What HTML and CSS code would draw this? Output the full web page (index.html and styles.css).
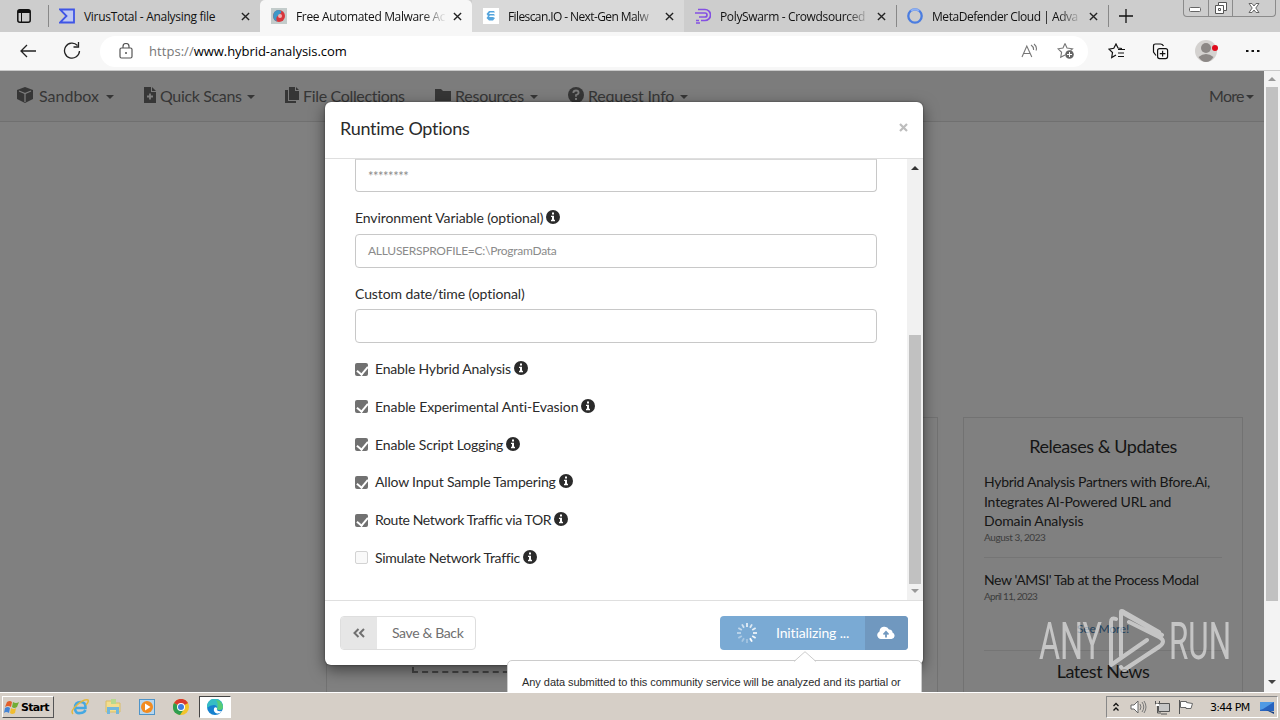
FILE: index.html
```html
<!DOCTYPE html>
<html lang="en">
<head>
<meta charset="utf-8">
<title>Free Automated Malware Analysis Service</title>
<link rel="stylesheet" href="styles.css">
</head>
<body>
<svg class="defs" width="0" height="0">
    <symbol id="info" viewBox="0 0 14 14"><circle cx="7" cy="7" r="7" fill="#2b2b2b"/><path d="M6 2.5h2v2H6zM5 5.7h3v4h1v1.5H5V9.7h1V7.1H5z" fill="#fff"/></symbol>
    <symbol id="close" viewBox="0 0 10 10"><path d="M1 1l8 8M9 1L1 9" stroke="#222" stroke-width="1.5"/></symbol>
</svg>

<div class="tabs">
    <div class="tab-menu">
        <svg width="14" height="14"><rect x=".8" y=".8" width="12.400" height="12.400" rx="2" fill="none" stroke="#111" stroke-width="1.500"/><path d="M1 1h12v3H1z" fill="#111"/><path d="M4.500 4v9" stroke="#111"/></svg>
    </div>
    <div class="tab first">
        <svg class="fav" width="16" height="16"><path d="M1 1.500h14v13H1l6.500-6.500z" fill="#bfc9f3" stroke="#3f55e6" stroke-width="1.800"/></svg>
        <span class="tab-title t1">VirusTotal - Analysing file</span>
        <svg class="x" width="9" height="9"><use href="#close"/></svg>
    </div>
    <div class="tab active">
        <svg class="fav" width="16" height="16"><rect width="16" height="16" fill="#c3cccb"/><circle cx="8" cy="8" r="6" fill="#d9363c"/><path d="M8 2a6 6 0 0 0-2 11.600C4 9 7 8 9 6s2-3-1-4z" fill="#3d98c8"/><circle cx="9" cy="8" r="2" fill="#f0b4b4"/></svg>
        <span class="tab-title t2 fade">Free Automated Malware Ac</span>
        <svg class="x" width="9" height="9"><use href="#close"/></svg>
    </div>
    <div class="tab light">
        <svg class="fav" width="16" height="16"><rect width="16" height="16" fill="#fff"/><path d="M6 3h5l1 1.500H7L6 6h5l1 1.500H7L6 9h4l2 1-2 2.500H6L3.500 10 5 8 3.500 6z" fill="#55a5dd"/></svg>
        <span class="tab-title t3 fade">Filescan.IO - Next-Gen Malw</span>
        <svg class="x" width="9" height="9"><use href="#close"/></svg>
    </div>
    <div class="tab">
        <svg class="fav" width="17" height="16"><path d="M3 1.500h7a5.500 5.500 0 0 1 0 11H6M0 5h10a2 2 0 0 1 0 4H4M1 12.500h3M1 15h4" fill="none" stroke="#8450e2" stroke-width="1.700"/></svg>
        <span class="tab-title t4 fade">PolySwarm - Crowdsourced</span>
        <svg class="x" width="9" height="9"><use href="#close"/></svg>
    </div>
    <div class="tab lined">
        <svg class="fav" width="16" height="16"><circle cx="8" cy="8" r="6.700" fill="none" stroke="#4b7de0" stroke-width="2.300"/><path d="M4 2.800A6.700 6.700 0 0 1 12 2.800" fill="none" stroke="#8eb0f3" stroke-width="2.300"/></svg>
        <span class="tab-title t5 fade">MetaDefender Cloud | Adva</span>
        <svg class="x" width="9" height="9"><use href="#close"/></svg>
    </div>
    <div class="new-tab">
        <svg width="14" height="14"><path d="M7 0v14M0 7h14" stroke="#111" stroke-width="1.300"/></svg>
    </div>
    <div class="win-buttons">
        <span class="wb min"><svg width="13" height="6"><rect x=".5" y=".5" width="11" height="4" rx="1" fill="#fff" stroke="#666"/></svg></span>
        <span class="wb max"><svg width="14" height="14"><path d="M4.500 1.500h8v8h-3v3h-8v-8h3z" fill="#fff" stroke="#555"/><path d="M4.500 4.500h5v5M4.500 7.500h2v2h-2z" fill="none" stroke="#555"/></svg></span>
        <span class="wb cls"><svg width="12" height="12"><path d="M1 1.500h3l2 2.500 2-2.500h3L7.800 6l3.200 4.500H8L6 8l-2 2.500H1L4.200 6z" fill="#fff" stroke="#666"/></svg></span>
    </div>
</div>

<div class="toolbar">
    <svg class="back" width="16" height="14"><path d="M16 7H1M7 1L1 7l6 6" fill="none" stroke="#222" stroke-width="1.300"/></svg>
    <svg class="reload" width="18" height="18"><path d="M14.500 3.500A7.500 7.500 0 1 0 16.500 9M15.500 0v5h-5" fill="none" stroke="#222" stroke-width="1.300"/></svg>
    <div class="address">
        <svg width="14" height="16"><rect x="1" y="5" width="12" height="10" rx="1.500" fill="none" stroke="#555" stroke-width="1.200"/><path d="M4 5V3.500a3 3 0 0 1 6 0V5" fill="none" stroke="#555" stroke-width="1.200"/><circle cx="7" cy="10" r="1" fill="#555"/></svg>
        <span class="url"><span class="scheme">https://</span>www.hybrid-analysis.com</span>
        <svg class="read" width="17" height="16"><path d="M1 14L5.800 3l5 11M2.800 10.500h6M10 2q3 2 2.500 5M13 1q3.500 3 2 6.500" fill="none" stroke="#777" stroke-width="1.100"/></svg>
        <svg class="addfav" width="18" height="18"><path d="M8 1.500l2 4.500 5.500.8-2 1.700M8 1.500L6 6l-5 .8 3.600 3.500-.9 5L8 13" fill="none" stroke="#777" stroke-width="1.100"/><circle cx="12.500" cy="12.500" r="4.300" fill="#666"/><path d="M12.500 10v5M10 12.500h5" stroke="#fff"/></svg>
    </div>
    <svg class="favs" width="18" height="16"><path d="M14 5.500l-4-.5-2-4-2.200 4.300-4.800.8 3.500 3.400-.8 5L8 12" fill="none" stroke="#111" stroke-width="1.200"/><path d="M10 6.500h7M10 10h6M10 13.500h6" stroke="#111" stroke-width="1.200"/></svg>
    <svg class="coll" width="17" height="17"><rect x="5.600" y="5.600" width="10" height="10" rx="2" fill="#f7f7f7" stroke="#111" stroke-width="1.200"/><path d="M10.600 7.800v5.600M7.800 10.600h5.600M4 12.500L1.500 9V3q0-2 2-2h5q2 0 3 2" fill="none" stroke="#111" stroke-width="1.200"/></svg>
    <svg class="user" width="24" height="22"><circle cx="11" cy="11" r="11" fill="#d4d2d0"/><circle cx="11" cy="8" r="5" fill="#8c8886"/><path d="M3.500 17q7.500-6 15 0-3 5-7.500 5t-7.500-5z" fill="#8c8886"/><circle cx="20" cy="8" r="3" fill="#e00b1c"/></svg>
    <svg class="dots" width="14" height="4"><path d="M0 1h2.500v2H0zM5.500 1H8v2H5.500zM11 1h2.500v2H11z" fill="#111"/></svg>
</div>

<div class="page">
    <div class="site">
        <div class="nav">
            <div class="nav-item sandbox">
                <svg width="16" height="16"><path d="M8 0l8 3v9l-8 4-8-4V3z" fill="#363636"/><path d="M2 4l6 2.500L14 4M8 6.500V15" fill="none" stroke="#7c7c7c" stroke-width="1.300"/></svg>
                <span>Sandbox</span><i class="caret"></i>
            </div>
            <div class="nav-item quick">
                <svg width="12" height="16"><path d="M0 0h7v5h5v11H0zM8 0l4 4H8z" fill="#363636"/><path d="M6 6.500v6M3 9.500h6" stroke="#7c7c7c" stroke-width="1.800"/></svg>
                <span>Quick Scans</span><i class="caret"></i>
            </div>
            <div class="nav-item files">
                <svg width="14" height="16"><path d="M4 0h6v4h4v9H4zM11 0l3 3h-3zM0 3h3v11h8v2H0z" fill="#363636"/></svg>
                <span>File Collections</span>
            </div>
            <div class="nav-item resources">
                <svg width="16" height="14"><path d="M0 1h6l2 2h8v10H0z" fill="#363636"/></svg>
                <span>Resources</span><i class="caret"></i>
            </div>
            <div class="nav-item request">
                <svg width="16" height="16"><circle cx="8" cy="8" r="8" fill="#363636"/><path d="M5.300 6Q5.500 3.500 8 3.500t2.600 2.200Q10.600 7.200 8 8v1.800" fill="none" stroke="#7c7c7c" stroke-width="1.800"/><path d="M7 11h2v2H7z" fill="#7c7c7c"/></svg>
                <span>Request Info</span><i class="caret"></i>
            </div>
            <div class="nav-item more"><span>More</span><i class="caret"></i></div>
        </div>
        <div class="columns">
            <div class="panel upload"><div class="dropzone"></div></div>
            <div class="panel news">
                <h3 class="releases">Releases &amp; Updates</h3>
                <div class="post">
                    <p class="headline"><span class="h1a">Hybrid Analysis Partners with Bfore.Ai,</span><br><span class="h1b">Integrates AI-Powered URL and</span><br><span class="h1c">Domain Analysis</span></p>
                    <p class="date">August 3, 2023</p>
                </div>
                <div class="post second">
                    <p class="headline h2a">New 'AMSI' Tab at the Process Modal</p>
                    <p class="date d2">April 11, 2023</p>
                </div>
                <p class="see-more">See More!</p>
                <h3 class="latest">Latest News</h3>
            </div>
        </div>
    </div>
    <div class="scrollbar">
        <i class="arrow up"></i>
        <div class="thumb"></div>
        <i class="arrow down"></i>
    </div>

    <div class="modal">
        <div class="modal-header">
            <h4>Runtime Options</h4>
            <svg width="9" height="9"><path d="M1 1l7 7M8 1L1 8" stroke="#bdbdbd" stroke-width="2.200"/></svg>
        </div>
        <div class="modal-body">
            <div class="form">
                <div class="field cut"><span class="stars">********</span></div>
                <div class="label lab1"><span>Environment Variable (optional)</span><svg width="14" height="14"><use href="#info"/></svg></div>
                <div class="field env">ALLUSERSPROFILE=C:\ProgramData</div>
                <div class="label lab2"><span>Custom date/time (optional)</span></div>
                <div class="field"></div>
                <div class="checks">
                    <div class="check"><i class="box on"></i><span class="c1">Enable Hybrid Analysis</span><svg width="14" height="14"><use href="#info"/></svg></div>
                    <div class="check"><i class="box on"></i><span class="c2">Enable Experimental Anti-Evasion</span><svg width="14" height="14"><use href="#info"/></svg></div>
                    <div class="check"><i class="box on"></i><span class="c3">Enable Script Logging</span><svg width="14" height="14"><use href="#info"/></svg></div>
                    <div class="check"><i class="box on"></i><span class="c4">Allow Input Sample Tampering</span><svg width="14" height="14"><use href="#info"/></svg></div>
                    <div class="check"><i class="box on"></i><span class="c5">Route Network Traffic via TOR</span><svg width="14" height="14"><use href="#info"/></svg></div>
                    <div class="check"><i class="box"></i><span class="c6">Simulate Network Traffic</span><svg width="14" height="14"><use href="#info"/></svg></div>
                </div>
            </div>
            <div class="inner-scroll">
                <i class="arrow up dark"></i>
                <div class="inner-thumb"></div>
                <i class="arrow down"></i>
            </div>
        </div>
        <div class="modal-footer">
            <div class="btn back-btn">
                <span class="btn-icon"><svg width="12" height="10"><path d="M5.500 1l-4 4 4 4M11 1L7 5l4 4" fill="none" stroke="#707070" stroke-width="2"/></svg></span>
                <span class="btn-text">Save &amp; Back</span>
            </div>
            <div class="btn init-btn">
                <svg class="spinner" width="22" height="22" viewBox="-11 -11 22 22" stroke="#fff" stroke-width="1.800">
                    <path d="M0-6v-4" opacity=".8"/><path d="M0-6v-4" transform="rotate(30)" opacity=".75"/><path d="M0-6v-4" transform="rotate(60)" opacity=".8"/><path d="M0-6v-4" transform="rotate(90)" opacity=".85"/><path d="M0-6v-4" transform="rotate(120)" opacity=".9"/><path d="M0-6v-4" transform="rotate(150)"/><path d="M0-6v-4" transform="rotate(180)" opacity=".3"/><path d="M0-6v-4" transform="rotate(210)" opacity=".35"/><path d="M0-6v-4" transform="rotate(240)" opacity=".4"/><path d="M0-6v-4" transform="rotate(270)" opacity=".5"/><path d="M0-6v-4" transform="rotate(300)" opacity=".55"/><path d="M0-6v-4" transform="rotate(330)" opacity=".65"/>
                </svg>
                <span class="init-text">Initializing ...</span>
                <span class="cloud"><svg width="18" height="14"><path d="M4 13a4 4 0 0 1-1.500-7.600A5 5 0 0 1 12 3.500a3 3 0 0 1 3.500 3A3.400 3.400 0 0 1 14.500 13z" fill="#fff"/><path d="M9 11.500V6M6.500 8.500L9 5.800l2.500 2.700" fill="none" stroke="#7098bf" stroke-width="1.800"/></svg></span>
            </div>
        </div>
    </div>
    <div class="popover">
        <svg class="tip" width="22" height="11"><path d="M0 11L11 .7 22 11z" fill="#fff"/><path d="M0 10.500L11 .7l11 9.800" fill="none" stroke="#ccc"/></svg>
        <p>Any data submitted to this community service will be analyzed and its partial or</p>
    </div>
    <svg class="watermark" width="196" height="66">
        <g font-family="Roboto, sans-serif" font-size="52" fill="#fff">
            <text x="2" y="51" textLength="63" lengthAdjust="spacingAndGlyphs">ANY</text>
            <text x="132" y="51" textLength="62" lengthAdjust="spacingAndGlyphs">RUN</text>
        </g>
        <path d="M79 11q-5-2-5 3v43l36-25M84 48V4l41 23M84 13V4q0-2 3 0l35 20M88 61l34-22q8-6 0-10L92 14M84 59q3 5 6 1l33-22" fill="none" stroke="#fff" stroke-width="4" stroke-linejoin="round" stroke-linecap="round"/>
    </svg>
</div>

<div class="taskbar">
    <div class="start">
        <svg width="17" height="15"><path d="M3 2q3-2 5 0L7 7Q4 5 1 7z" fill="#e25f2b"/><path d="M9 2q3 2 6 0l-2 5q-3 2-5 0z" fill="#72ad36"/><path d="M1 8q3-2 5 0l-1 5q-3-2-5 0z" fill="#4484d5"/><path d="M7 8q3 2 5 0l-1 5q-3 2-5 0z" fill="#f1bd2f"/></svg>
        <span>Start</span>
    </div>
    <svg class="task ie" width="18" height="18"><path d="M4 10h10.500Q15 4 9.500 4 4 4 4 10t5.500 5q3.500 0 5-3" fill="none" stroke="#45a8e2" stroke-width="2.600"/><path d="M2 16Q-1 13 6 7t11-5q1 2-2 5" fill="none" stroke="#e4b83e" stroke-width="1.500"/></svg>
    <svg class="task folder" width="18" height="18"><path d="M2 3h6l1 2h7v9H2z" fill="#f3dd8e" stroke="#d9bd67"/><path d="M7 1h5v5H7z" fill="#b7d98e"/><path d="M3 9h12v7h-3v-4H6v4H3z" fill="#72b7dc"/></svg>
    <svg class="task player" width="16" height="16"><rect x=".5" y=".5" width="15" height="15" fill="#b7d6ee" stroke="#4f94c8"/><circle cx="8" cy="8" r="6" fill="#f28b20"/><path d="M6 4.500l5.500 3.500L6 11.500z" fill="#fff"/></svg>
    <svg class="task chrome" width="16" height="16"><circle cx="8" cy="8" r="8" fill="#f2c42b"/><path d="M8 8L1 4a8 8 0 0 1 14 0z" fill="#d93a2f"/><path d="M8 8L1 4a8 8 0 0 0 6 12l4-6z" fill="#2e9e4f"/><circle cx="8" cy="8" r="4" fill="#fff"/><circle cx="8" cy="8" r="3" fill="#3e7de0"/></svg>
    <div class="running"><svg width="16" height="16"><circle cx="8" cy="8" r="8" fill="#1681cf"/><path d="M0 7a8 8 0 0 1 16 1q0 3-4 3-3 0-2-2 0-3-3-3-4 0-7 3z" fill="#35bdc4"/><path d="M9 1a8 8 0 0 1 7 7q0 3-4 3l-2-1q2-5-1-9z" fill="#57cc77"/><path d="M10 9q-1 4 5 3-2 3-5 2.500Q6 13 7 9.500q1-2 3-.5z" fill="#fff"/></svg></div>
    <div class="tray">
        <svg class="chev" width="6" height="10"><path d="M.5 4L3 1.500 5.500 4M.5 8.500L3 6l2.500 2.500" fill="none" stroke="#111" stroke-width="1.300"/></svg>
        <svg class="vol" width="17" height="14"><path d="M1 5h3l4-4v12L4 9H1z" fill="#fff" stroke="#666"/><path d="M10 4q2 3 0 6M12 2q3.500 5 0 10M14 1q4 6 0 12" fill="none" stroke="#777"/></svg>
        <svg class="net" width="17" height="15"><path d="M4.500 3.500h11v8h-11z" fill="#c6c6c6" stroke="#555"/><path d="M1.500 1v3h4V1M3.500 4v9H7M7 14h6" fill="none" stroke="#555"/><path d="M2 4h3v2H2z" fill="#fff"/></svg>
        <svg class="flag" width="17" height="14"><path d="M1.500 0v14" stroke="#555"/><path d="M2.500 1.500h6v1l6 1-1.500 5H8v-1H2.500z" fill="#fff" stroke="#666"/></svg>
        <span class="clock">3:44 PM</span>
        <svg class="desk" width="15" height="13"><path d="M0 1h14v9H0z" fill="#2763be"/><path d="M0 1h14L3 8 0 9z" fill="#4f9ae4"/><path d="M6 9l8 2v2z" fill="#164184"/></svg>
    </div>
</div>
</body>
</html>
```
FILE: styles.css
```css
*{
    box-sizing: border-box;
}
body{
    margin: 0;
    width: 1280px;
    height: 720px;
    overflow: hidden;
    display: flex;
    flex-direction: column;
    font-family: Lato, "Liberation Sans", sans-serif;
    color: #2b2b2b;
}
p, h3, h4{
    margin: 0;
    font-weight: 400;
}
svg{
    display: block;
    flex: none;
}
.defs{
    position: absolute;
}
span{
    white-space: nowrap;
}

/* browser tabs */
.tabs{
    height: 32px;
    flex: none;
    display: flex;
    background: #cdcdcd;
    font-family: "Open Sans", "Noto Sans", sans-serif;
    font-size: 12px;
    color: #111;
}
.tab-menu{
    width: 48px;
    padding: 9px 0 0 17px;
}
.tab, .new-tab{
    height: 32px;
    display: flex;
    align-items: center;
    border-left: 1px solid transparent;
}
.tab{
    width: 212px;
    padding: 0 10px 0 10px;
}
.tab.first, .tab.lined, .new-tab{
    border-image: linear-gradient(#cdcdcd 18%, #888 18%, #888 82%, #cdcdcd 82%) 1;
    border-width: 0 0 0 1px;
}
.tab.active{
    background: #f7f7f7;
    border-radius: 5px 5px 0 0;
}
.tab.light{
    background: #d9d9d9;
}
.fav{
    width: 16px;
}
.tab-title{
    width: 150px;
    margin-left: 9px;
}
.fade{
    -webkit-mask-image: linear-gradient(90deg, #000 84%, transparent 100%);
    mask-image: linear-gradient(90deg, #000 84%, transparent 100%);
}
.t1{ letter-spacing: -.3px; }
.t2{ letter-spacing: -.35px; }
.t3{ letter-spacing: -.6px; }
.t4{ letter-spacing: -.35px; }
.t5{ letter-spacing: -.45px; }
.x{
    margin-left: 7px;
}
.new-tab{
    width: 24px;
    padding-left: 10px;
}
.win-buttons{
    display: flex;
    width: 93px;
    height: 17px;
    margin-left: 51px;
    border: 1px solid #8b8b8b;
    border-top: 0;
    border-radius: 0 0 4px 4px;
}
.wb{
    display: flex;
    align-items: center;
    justify-content: center;
    width: 25px;
    border-right: 1px solid #8b8b8b;
}
.wb.min{ padding-top: 4px; }
.wb.cls{
    width: 42px;
    border: 0;
}

/* toolbar */
.toolbar{
    height: 39px;
    flex: none;
    display: flex;
    align-items: center;
    background: #f7f7f7;
    border-bottom: 1px solid #c9c9c9;
}
.back{ margin-left: 20px; }
.reload{ margin-left: 27px; }
.address{
    width: 988px;
    height: 31px;
    margin-left: 19px;
    padding-left: 19px;
    display: flex;
    align-items: center;
    background: #fff;
    border-radius: 16px;
}
.url{
    width: 870px;
    margin-left: 16px;
    font: 13px "Open Sans", "Noto Sans", sans-serif;
    letter-spacing: -.05px;
    color: #000;
}
.scheme{
    color: #777;
    letter-spacing: .05px;
}
.read{ margin-left: 2px; }
.addfav{ margin-left: 19px; }
.favs{ margin-left: 20px; }
.coll{ margin-left: 26px; }
.user{ margin-left: 26px; }
.dots{ margin-left: 27px; }

/* page */
.page{
    position: relative;
    height: 621px;
    flex: none;
    display: flex;
    overflow: hidden;
}
.site{
    width: 1264px;
    background: #808080;
}
.nav{
    height: 51px;
    display: flex;
    padding-left: 17px;
    background: #7c7c7c;
    border-bottom: 1px solid #707070;
    font-size: 16px;
    color: #363636;
}
.nav-item{
    display: flex;
    align-items: center;
    height: 48px;
}
.caret{
    border: 4px solid transparent;
    border-top-color: #363636;
    border-bottom: 0;
    margin: 3px 0 0 6px;
}
.nav span{ flex: none; }
.sandbox{ width: 127px; }
.sandbox span{ margin-left: 6px; width: 61px; }
.quick{ width: 141px; }
.quick span{ margin-left: 4px; width: 81px; letter-spacing: -.35px; }
.files{ width: 150px; }
.files span{ margin-left: 4px; letter-spacing: -.33px; }
.resources{ width: 133px; }
.resources span{ margin-left: 4px; width: 69px; letter-spacing: -.25px; }
.request{ width: 641px; }
.request span{ margin-left: 4px; width: 86px; letter-spacing: -.2px; }
.more span{ letter-spacing: -.7px; }
.more .caret{ margin-left: 2px; }
.columns{
    display: flex;
    gap: 25px;
    padding: 295px 0 0 326px;
}
.panel{
    height: 300px;
    border: 1px solid #727272;
}
.upload{
    width: 612px;
    padding-left: 85px;
}
.dropzone{
    width: 440px;
    height: 255px;
    border: 2px dashed #454545;
}
.news{
    width: 280px;
    padding: 16px 20px 0;
    color: #151515;
}
.news h3{
    font-size: 18px;
    line-height: 24px;
    text-align: center;
    letter-spacing: -.45px;
}
.post{
    height: 86px;
    margin-top: 14px;
    border-bottom: 1px solid #757575;
}
.post.second{
    height: 39px;
    margin-top: 12px;
    border: 0;
}
.headline{
    font-size: 14px;
    line-height: 19.5px;
    white-space: nowrap;
}
.h1a{ letter-spacing: -.29px; }
.h1b{ letter-spacing: -.2px; }
.h1c{ letter-spacing: -.13px; }
.h2a{ letter-spacing: -.38px; }
.date{
    margin-top: -1px;
    font-size: 10px;
    line-height: 14px;
    letter-spacing: -.42px;
    color: #3d3d3d;
}
.d2{ letter-spacing: -.7px; }
.see-more{
    height: 42px;
    padding-top: 11px;
    border-bottom: 1px solid #757575;
    text-align: center;
    font-size: 12px;
    line-height: 17px;
    letter-spacing: -.2px;
    color: #203f5b;
}
.news .latest{ margin-top: 8px; }
.scrollbar{
    width: 16px;
    display: flex;
    flex-direction: column;
    align-items: center;
    background: #f3f3f3;
}
.arrow{
    border: 4px solid transparent;
}
.arrow.up{
    border-top: 0;
    border-bottom-color: #999;
}
.arrow.down{
    border-bottom: 0;
    border-top-color: #999;
}
.arrow.dark{ border-bottom-color: #333; }
.scrollbar .up{ margin-top: 6px; }
.scrollbar .down{
    margin-top: 79px;
    border-top-color: #444;
}
.thumb{
    width: 12px;
    height: 514px;
    margin-top: 6px;
    background: #c1c1c1;
}

/* runtime options modal */
.modal{
    position: absolute;
    left: 325px;
    top: 31px;
    width: 598px;
    height: 563px;
    background: #fff;
    border-radius: 6px;
    box-shadow: 0 5px 15px rgba(0,0,0,.5), 0 0 2px rgba(0,0,0,.5);
}
.modal-header{
    height: 57px;
    display: flex;
    justify-content: space-between;
    padding: 13px 15px 0;
    border-bottom: 1px solid #dfdfdf;
}
.modal-header h4{
    font-size: 18px;
    line-height: 26px;
    letter-spacing: -.27px;
}
.modal-header svg{ margin-top: 8px; }
.modal-body{
    height: 441px;
    display: flex;
}
.form{
    width: 582px;
    padding-left: 30px;
}
.field{
    width: 522px;
    height: 34px;
    padding: 0 12px;
    border: 1px solid #c8c8c8;
    border-radius: 4px;
    font-size: 12px;
    line-height: 32px;
    color: #8b8b8b;
}
.env{ letter-spacing: -.27px; }
.field.cut{
    height: 33px;
    border-top-color: #d8d8d8;
    border-radius: 0 0 4px 4px;
}
.stars{
    font-size: 13px;
    letter-spacing: -.5px;
}
.label, .check{
    display: flex;
    align-items: center;
    font-size: 14px;
}
.label{
    height: 20px;
    letter-spacing: -.1px;
}
.lab1{ margin: 15px 0 7px; }
.lab2{ margin: 15px 0 6px; }
.label svg, .check svg{
    margin-left: 3px;
}
.check svg{ margin-top: -2px; }
.checks{ padding-top: 16px; }
.check{
    height: 20px;
    margin-bottom: 17.8px;
}
.check span{ margin-top: -1px; }
.c1{ letter-spacing: -.18px; }
.c2{ letter-spacing: -.09px; }
.c3{ letter-spacing: -.15px; }
.c4{ letter-spacing: -.18px; }
.c5{ letter-spacing: -.38px; }
.c6{ letter-spacing: -.29px; }
.box{
    width: 13px;
    height: 13px;
    margin-right: 7px;
    border: 1px solid #d3d3d3;
    border-radius: 2px;
    background: #f9f9f9;
}
.box.on{
    border: 0;
    background: #717171;
    padding: 1px 0 0 4px;
}
.box.on::before{
    content: "";
    display: block;
    width: 5px;
    height: 9px;
    border: solid #fff;
    border-width: 0 2px 2px 0;
    transform: rotate(40deg);
}
.inner-scroll{
    width: 16px;
    display: flex;
    flex-direction: column;
    align-items: center;
    background: #f1f1f1;
}
.inner-scroll .up{ margin-top: 7px; }
.inner-thumb{
    width: 12px;
    height: 249px;
    margin: 165px 0 5px;
    background: #c1c1c1;
}
.modal-footer{
    height: 65px;
    display: flex;
    justify-content: space-between;
    padding: 15px 15px 0;
    border-top: 1px solid #dfdfdf;
}
.btn{
    height: 34px;
    display: flex;
    align-items: center;
    border-radius: 4px;
    font-size: 14px;
    overflow: hidden;
}
.back-btn{
    width: 136px;
    border: 1px solid #dedede;
    color: #707070;
}
.btn-icon{
    width: 36px;
    height: 34px;
    display: flex;
    align-items: center;
    justify-content: center;
    background: #e6e6e6;
}
.btn-text{
    margin: -2px 0 0 15px;
    letter-spacing: -.38px;
}
.init-btn{
    width: 188px;
    padding-left: 16px;
    background: #7aaad4;
    color: #fff;
}
.init-text{
    width: 89px;
    margin: -2px 0 0 18px;
    letter-spacing: -.13px;
}
.cloud{
    width: 43px;
    height: 34px;
    display: flex;
    align-items: center;
    justify-content: center;
    padding-right: 2px;
    background: #7098bf;
}
.popover{
    position: absolute;
    left: 507px;
    top: 589px;
    width: 415px;
    height: 70px;
    padding: 13px 14px;
    background: #fff;
    border: 1px solid #ccc;
    border-radius: 5px;
    font: 11px/17px "Liberation Sans", sans-serif;
    letter-spacing: -.05px;
    white-space: nowrap;
}
.tip{
    position: absolute;
    left: 286px;
    top: -10px;
}
.watermark{
    position: absolute;
    left: 1037px;
    top: 537px;
    opacity: .55;
}

/* taskbar */
.taskbar{
    height: 28px;
    display: flex;
    align-items: center;
    padding: 1px 0 0 2px;
    background: #d6cfc7;
    border-top: 1px solid #fff;
}
.start{
    width: 52px;
    height: 22px;
    display: flex;
    align-items: center;
    padding-left: 1px;
    border: 1px solid;
    border-color: #fff #555 #555 #fff;
    font: bold 11px "DejaVu Sans", sans-serif;
    letter-spacing: -.7px;
    color: #000;
}
.ie{ margin-left: 17px; }
.folder{ margin-left: 15px; }
.player{ margin-left: 17px; }
.chrome{ margin-left: 18px; }
.running{
    width: 32px;
    height: 22px;
    margin-left: 10px;
    padding: 2px 0 0 7px;
    background: #fff;
    border: 1px solid;
    border-color: #444 #fff #fff #444;
}
.tray{
    width: 172px;
    height: 22px;
    display: flex;
    align-items: center;
    margin-left: auto;
    margin-right: 2px;
    padding-left: 6px;
    border: 1px solid;
    border-color: #888 #fff #fff #888;
}
.vol{ margin-left: 11px; }
.net{ margin-left: 7px; }
.flag{ margin-left: 7px; }
.clock{
    width: 40px;
    margin-left: 15px;
    font: 11px "DejaVu Sans", sans-serif;
    letter-spacing: -.7px;
    color: #000;
}
.desk{ margin-left: 10px; }
```
